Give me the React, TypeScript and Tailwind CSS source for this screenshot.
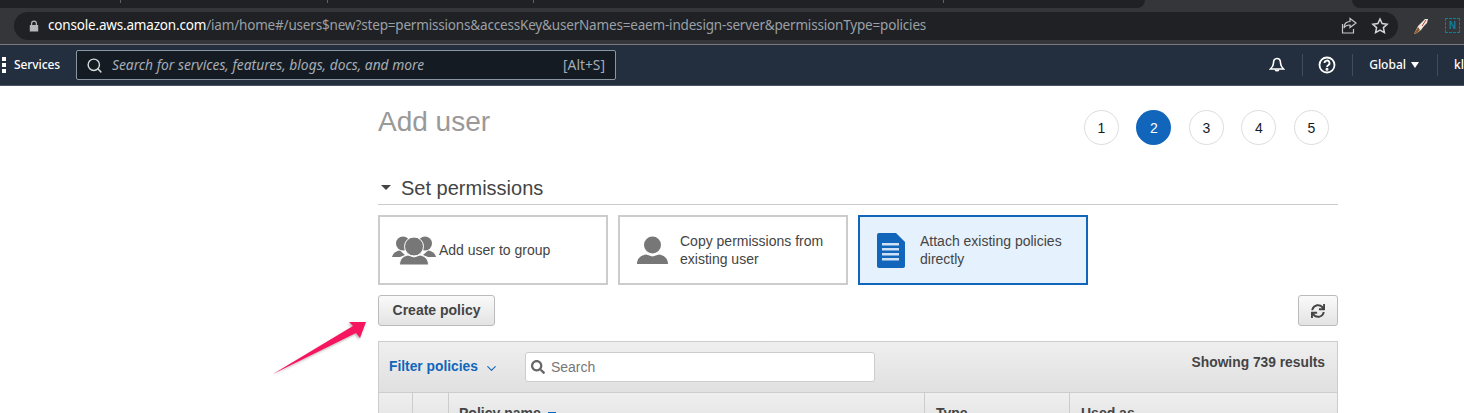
import React from 'react';
import { ChevronDown, Search } from 'lucide-react';
import { FaSearch, FaSync } from 'react-icons/fa';

const StepCircle = ({ n, active }: { n: number; active?: boolean }) => (
  <div
    className={
      active
        ? 'flex h-[35px] w-[35px] items-center justify-center rounded-full bg-[#1166bb] text-sm text-white'
        : 'flex h-[35px] w-[35px] items-center justify-center rounded-full border border-[#dddddd] bg-white text-sm text-[#16191f]'
    }
  >
    {n}
  </div>
);

const GroupIcon = () => (
  <svg width="44" height="29" viewBox="0 0 44 29" fill="#777777">
    <circle cx="11" cy="7.500" r="7" />
    <circle cx="33" cy="7.500" r="7" />
    <path d="M0 21 C1 17 4 15 8 14.500 L13 19 L8 21 Z" />
    <path d="M44 21 C43 17 40 15 36 14.500 L31 19 L36 21 Z" />
    <circle cx="22" cy="10.500" r="9.500" stroke="#ffffff" strokeWidth="1" />
    <path d="M7.500 29 C7.500 23 11 20 16 19 L22 21 L28 19 C33 20 36.500 23 36.500 29 Z" stroke="#ffffff" strokeWidth="1" />
  </svg>
);

const UserIcon = () => (
  <svg width="31" height="29" viewBox="0 0 31 29" fill="#777777">
    <circle cx="15.500" cy="9" r="8.500" />
    <path d="M0 28 C0 22 4 19.500 9 18.500 L15.500 20.500 L22 18.500 C27 19.500 31 22 31 28 Z" />
  </svg>
);

const DocIcon = () => (
  <svg width="28" height="35" viewBox="0 0 28 35">
    <path d="M2 0 H19 L28 9 V33 Q28 35 26 35 H2 Q0 35 0 33 V2 Q0 0 2 0 Z" fill="#1166bb" />
    <g fill="#cfe2f5">
      <rect x="5" y="10" width="17" height="2.500" />
      <rect x="5" y="15" width="17" height="2.500" />
      <rect x="5" y="20" width="17" height="2.500" />
      <rect x="5" y="25" width="17" height="2.500" />
    </g>
  </svg>
);

export default function App() {
  return (
    <div className="relative h-[413px] w-[1464px] overflow-hidden bg-white font-['Liberation_Sans',sans-serif]">
      {/* browser chrome */}
      <div className="flex h-2 bg-[#35363a]">
        <div className="flex w-[1145px] rounded-br-lg bg-[#202124]">
          <span className="ml-[120px] h-[3px] w-px bg-[#5f6368]" />
          <span className="ml-[206px] h-[3px] w-px bg-[#5f6368]" />
          <span className="ml-[205px] h-[3px] w-px bg-[#5f6368]" />
          <span className="ml-[409px] h-[3px] w-px bg-[#5f6368]" />
        </div>
        <div className="w-[207px]" />
        <div className="flex-1 rounded-bl-lg bg-[#202124]" />
      </div>
      <div className="flex h-[37px] items-center border-b border-[#77797c] bg-[#35363a] pb-px pl-3.5">
        <div className="flex h-7 w-[1384px] items-center rounded-full bg-[#202124] pr-[9px] pl-[15px]">
          <svg width="10" height="12" viewBox="0 0 10 12" fill="#b4b6b8">
            <path d="M2 5V3.500a3 3 0 0 1 6 0V5h1.200v6.500H.8V5Zm1.200 0h3.600V3.500a1.800 1.800 0 0 0-3.600 0Z" />
          </svg>
          <span className="ml-[9px] font-['Noto_Sans',sans-serif] text-[13.5px] tracking-[-0.18px] whitespace-nowrap text-[#9aa0a6]">
            <span className="text-white">console.aws.amazon.com</span>
            /iam/home#/users$new?step=permissions&accessKey&userNames=eaem-indesign-server&permissionType=policies
          </span>
          <div className="ml-auto flex items-center gap-[13px]">
            <svg width="18" height="18" viewBox="0 0 18 18" fill="none" stroke="#c4c7c9" strokeWidth="1.200">
              <path d="M10 1.500 16 6l-6 4.500V8c-3 0-5 1-6 3 0-4 2-6.500 6-6.500Z" />
              <path d="M2.500 7v9h11v-4" />
            </svg>
            <svg width="18" height="18" viewBox="0 0 18 18" fill="none" stroke="#d5d7d9" strokeWidth="1.500">
              <path d="m9 2 2.100 4.600 5 .6-3.700 3.400 1 5L9 13.100l-4.400 2.500 1-5L1.900 7.200l5-.6Z" />
            </svg>
          </div>
        </div>
        <svg className="ml-[15px]" width="16" height="18" viewBox="0 0 16 18">
          <path d="M1 17 5 9l7-7 3 0-1 4-3 3-3 4-4 3Z" fill="#f0e8dc" />
          <path d="M1 17 5 10l2 3-3 3Z" fill="#8a5a2b" />
          <path d="M9 9l4-6" stroke="#c0392b" strokeWidth="1" />
        </svg>
        <div className="ml-[16px] flex h-[15px] w-[15px] items-center justify-center border border-dashed border-[#0b7f9a] text-[10px] font-bold text-[#0b7f9a]">
          N
        </div>
      </div>

      {/* aws nav */}
      <div className="flex h-[41px] items-center border-b border-[#4a5563] bg-[#232f3e] text-white">
        <div className="ml-0.5 flex flex-col gap-[2px]">
          <span className="h-[4px] w-[4px] bg-white" />
          <span className="h-[4px] w-[4px] bg-white" />
          <span className="h-[4px] w-[4px] bg-white" />
        </div>
        <span className="ml-2 font-['Noto_Sans',sans-serif] text-[12px] font-medium tracking-[-0.1px]">Services</span>
        <div className="ml-4 flex h-[30px] w-[540px] items-center rounded-[2px] border border-[#8a97a3] bg-[#151b23] pr-[10px] pl-[9px] font-['Noto_Sans',sans-serif] text-[13.8px] text-[#a5adb5]">
          <Search size={17} strokeWidth={2} className="text-[#d5dbdb]" />
          <span className="ml-[9px] italic">Search for services, features, blogs, docs, and more</span>
          <span className="ml-auto">[Alt+S]</span>
        </div>
        <div className="ml-auto flex h-[22px] items-center">
          <svg width="16" height="17" viewBox="0 0 16 17" fill="none" stroke="#ffffff" strokeWidth="1.600">
            <path d="M8 1.500c2.500 0 3.500 2 3.500 4.500 0 3 1.500 4.500 3 6H1.500c1.500-1.500 3-3 3-6C4.500 3.500 5.500 1.500 8 1.500Z" />
            <path d="M6.200 12.500a1.900 1.900 0 0 0 3.600 0" />
          </svg>
          <div className="ml-[17px] h-[22px] w-px bg-[#414c5a]" />
          <svg className="ml-[15px]" width="18" height="18" viewBox="0 0 18 18" fill="none" stroke="#ffffff" strokeWidth="1.800">
            <circle cx="9" cy="9" r="7.500" />
            <path d="M6.500 7a2.500 2.500 0 1 1 3.700 2.200c-.8.500-1.200.9-1.200 1.800" />
            <circle cx="9" cy="13.300" r=".6" />
          </svg>
          <div className="ml-[16px] h-[22px] w-px bg-[#414c5a]" />
          <span className="ml-[16px] font-['Noto_Sans',sans-serif] text-[12px] font-medium">Global</span>
          <span className="ml-[5px] h-0 w-0 border-x-[4.500px] border-t-[6px] border-x-transparent border-t-white" />
          <div className="ml-[18px] h-[22px] w-px bg-[#414c5a]" />
          <span className="ml-4 w-[10px] overflow-hidden font-['Noto_Sans',sans-serif] text-[12px] font-medium">kl</span>
        </div>
      </div>

      {/* wizard */}
      <div className="ml-[378px] w-[960px]">
        <div className="flex items-start justify-between">
          <h1 className="mt-5 text-[28px] leading-8 text-[#999999]">Add user</h1>
          <div className="mt-6 mr-[9.100px] flex gap-[17.500px]">
            <StepCircle n={1} />
            <StepCircle n={2} active />
            <StepCircle n={3} />
            <StepCircle n={4} />
            <StepCircle n={5} />
          </div>
        </div>

        <div className="mt-[27px] flex h-[33px] items-center border-b border-[#cccccc] pb-px text-[#444444]">
          <span className="ml-[3px] h-0 w-0 border-x-[5px] border-t-[5px] border-x-transparent border-t-[#444444]" />
          <h2 className="ml-2.5 text-[20px] leading-6">Set permissions</h2>
        </div>

        <div className="mt-[10px] flex gap-2.5">
          <div className="flex h-[70px] w-[230px] items-center border-2 border-[#cccccc] bg-white pl-3 text-sm text-[#444444]">
            <GroupIcon />
            <span className="ml-[3px]">Add user to group</span>
          </div>
          <div className="flex h-[70px] w-[230px] items-center border-2 border-[#cccccc] bg-white pl-[17px] text-sm leading-[18px] text-[#444444]">
            <UserIcon />
            <span className="ml-3">
              Copy permissions from
              <br />
              existing user
            </span>
          </div>
          <div className="flex h-[70px] w-[230px] items-center border-2 border-[#1166bb] bg-[#e5f1fc] pl-[17px] text-sm leading-[18px] text-[#444444]">
            <DocIcon />
            <span className="ml-[15px]">
              Attach existing policies
              <br />
              directly
            </span>
          </div>
        </div>

        <div className="mt-2.5 flex items-center justify-between">
          <button className="h-[31px] w-[117px] rounded-[3px] border border-[#bbbbbb] bg-gradient-to-b from-[#fafafa] to-[#e3e3e3] pb-px text-sm font-bold text-[#444444]">
            Create policy
          </button>
          <button className="flex h-[31px] w-10 items-center justify-center rounded-[3px] border border-[#bbbbbb] bg-gradient-to-b from-[#fafafa] to-[#e3e3e3]">
            <FaSync size={14} className="text-[#444444]" />
          </button>
        </div>

        <div className="mt-[15px] border border-[#cccccc]">
          <div className="flex h-[51px] border-b border-[#cccccc] bg-gradient-to-b from-[#efefef] to-[#e0e0e0]">
            <div className="flex items-center">
              <button className="ml-2.5 text-[13.8px] font-bold text-[#1166bb]">Filter policies</button>
              <ChevronDown size={15} strokeWidth={1.800} className="mt-0.5 ml-[6px] text-[#1166bb]" />
              <div className="ml-[26px] flex h-[30px] w-[350px] items-center rounded-[3px] border border-[#cccccc] bg-white pl-[5px] text-sm text-[#777777]">
                <FaSearch size={14} className="text-[#666666]" />
                <span className="ml-[6px]">Search</span>
              </div>
            </div>
            <span className="mt-[13px] mr-3 ml-auto text-[13.8px] leading-4 font-bold text-[#444444]">Showing 739 results</span>
          </div>
          <div className="flex h-10 bg-gradient-to-b from-[#efefef] to-[#e0e0e0] text-sm font-bold text-[#444444]">
            <div className="w-[34px] border-r border-[#cccccc]" />
            <div className="w-[36px] border-r border-[#cccccc]" />
            <div className="flex w-[476px] items-start border-r border-[#cccccc] pt-[12px] pl-[10px] leading-4">
              Policy name
              <span className="mt-[7px] ml-[7px] h-[3px] w-[8px] bg-[#1166bb]" />
            </div>
            <div className="w-[145px] border-r border-[#cccccc] pt-[12px] pl-[11px] leading-4">Type</div>
            <div className="pt-[12px] pl-[11px] leading-4">Used as</div>
          </div>
        </div>
      </div>

      {/* annotation arrow */}
      <svg className="absolute top-[318px] left-[268px]" width="104" height="64" viewBox="0 0 104 64">
        <defs>
          <filter id="arrowShadow" x="-20%" y="-20%" width="140%" height="140%">
            <feDropShadow dx="-1" dy="1.500" stdDeviation="1" floodColor="#000000" floodOpacity="0.3" />
          </filter>
        </defs>
        <path d="M5 56 L85 8 L81 4 L98 4 L92 20 L88 15 Z" fill="#f5145f" filter="url(#arrowShadow)" />
      </svg>
    </div>
  );
}
